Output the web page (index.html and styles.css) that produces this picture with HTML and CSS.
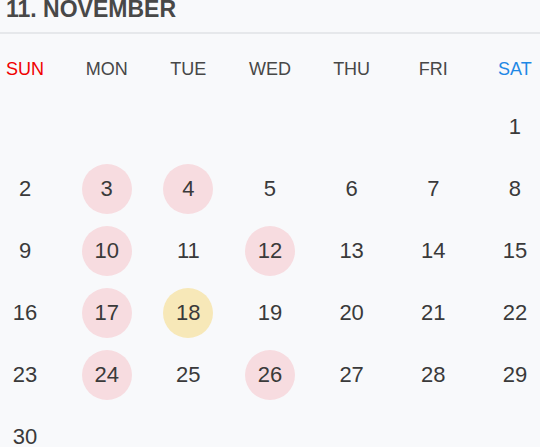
FILE: index.html
```html
<!DOCTYPE html>
<html>
<head>
<meta charset="utf-8">
<link rel="stylesheet" href="styles.css">
</head>
<body>
<div class="cal">
  <div class="title">11. NOVEMBER</div>
  <div class="week">
    <div class="wd sun">SUN</div>
    <div class="wd">MON</div>
    <div class="wd">TUE</div>
    <div class="wd">WED</div>
    <div class="wd">THU</div>
    <div class="wd">FRI</div>
    <div class="wd sat">SAT</div>
  </div>
  <div class="days">
    <div class="d"></div><div class="d"></div><div class="d"></div><div class="d"></div><div class="d"></div><div class="d"></div><div class="d">1</div>
    <div class="d">2</div><div class="d pink">3</div><div class="d pink">4</div><div class="d">5</div><div class="d">6</div><div class="d">7</div><div class="d">8</div>
    <div class="d">9</div><div class="d pink">10</div><div class="d">11</div><div class="d pink">12</div><div class="d">13</div><div class="d">14</div><div class="d">15</div>
    <div class="d">16</div><div class="d pink">17</div><div class="d yellow">18</div><div class="d">19</div><div class="d">20</div><div class="d">21</div><div class="d">22</div>
    <div class="d">23</div><div class="d pink">24</div><div class="d">25</div><div class="d pink">26</div><div class="d">27</div><div class="d">28</div><div class="d">29</div>
    <div class="d">30</div>
  </div>
</div>
</body>
</html>
```
FILE: styles.css
```css
html, body {
  margin: 0;
  padding: 0;
  background: #f8f9fb;
  overflow: hidden;
}
.cal {
  width: 540px;
  font-family: "Liberation Sans", Arial, sans-serif;
  color: #3a3a3a;
}
.title {
  margin-top: -2px;
  padding: 0 6px 12px;
  font-size: 23px;
  line-height: 22px;
  font-weight: bold;
  color: #484848;
  border-bottom: 2px solid #e6e8eb;
}
.week {
  margin-top: 24px;
  display: grid;
  grid-template-columns: repeat(7, 50px);
  justify-content: space-between;
}
.wd {
  font-size: 18px;
  line-height: 22px;
  color: #474747;
  text-align: center;
  white-space: nowrap;
  display: flex;
  justify-content: center;
}
.wd.sun { color: #f00000; }
.wd.sat { color: #1e88e5; }
.days {
  margin-top: 22px;
  display: grid;
  grid-template-columns: repeat(7, 50px);
  grid-auto-rows: 50px;
  row-gap: 12px;
  justify-content: space-between;
}
.d {
  width: 50px;
  height: 50px;
  border-radius: 50%;
  display: flex;
  align-items: center;
  justify-content: center;
  font-size: 22px;
  line-height: 1;
  color: #3a3a3a;
}
.d.pink { background: #f7dce0; }
.d.yellow { background: #f7e8b8; }
```
